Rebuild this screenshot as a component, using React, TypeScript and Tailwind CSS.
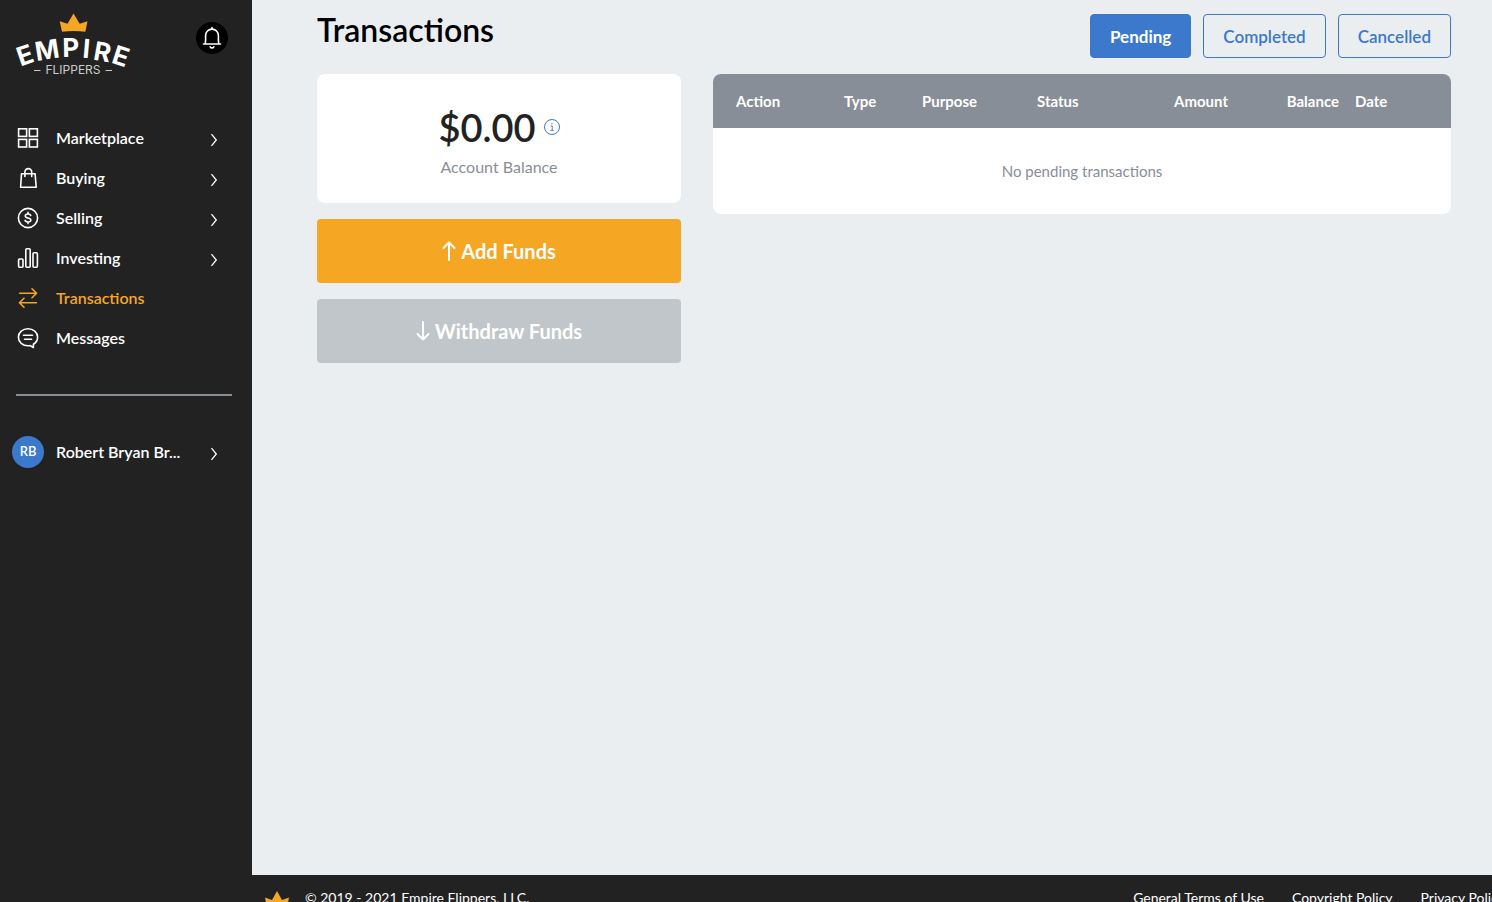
import { useState, type ReactNode } from "react";
import { clsx } from "clsx";

const navItems = [
  { label: "Marketplace", icon: <GridIcon />, expandable: true },
  { label: "Buying", icon: <BagIcon />, expandable: true },
  { label: "Selling", icon: <DollarIcon />, expandable: true },
  { label: "Investing", icon: <BarsIcon />, expandable: true },
  { label: "Transactions", icon: <TransferIcon />, active: true },
  { label: "Messages", icon: <MessageIcon /> },
];

const columns = [
  { label: "Action", className: "w-[123px] pl-[23px] pr-2 text-left" },
  { label: "Type", className: "w-[78px] px-2 text-left" },
  { label: "Purpose", className: "w-[115px] px-2 text-left" },
  { label: "Status", className: "w-[115px] px-2 text-left" },
  { label: "Amount", className: "w-[92px] px-2 text-right" },
  { label: "Balance", className: "w-[111px] px-2 text-right" },
  { label: "Date", className: "px-2 text-left" },
];

const tabs = ["Pending", "Completed", "Cancelled"];

function Icon({ children }: { children: ReactNode }) {
  return (
    <svg
      width="24"
      height="24"
      viewBox="0 0 24 24"
      fill="none"
      stroke="currentColor"
      strokeWidth="1.6"
      strokeLinecap="round"
      strokeLinejoin="round"
      className="shrink-0"
      aria-hidden="true"
    >
      {children}
    </svg>
  );
}

function GridIcon() {
  return (
    <Icon>
      <g strokeLinejoin="miter">
        <rect x="2.6" y="2.8" width="8" height="7.6" />
        <rect x="13.4" y="2.8" width="8" height="7.6" />
        <rect x="2.6" y="13.4" width="8" height="7.6" />
        <rect x="13.4" y="13.4" width="8" height="7.6" />
      </g>
    </Icon>
  );
}

function BagIcon() {
  return (
    <Icon>
      <path d="M5.5 7.8h13.6l1.1 13.4H4.6z" />
      <path d="M8.9 10.4V6a3.4 3.4 0 0 1 6.8 0v4.4" />
    </Icon>
  );
}

function DollarIcon() {
  return (
    <Icon>
      <circle cx="12" cy="12" r="9.6" />
      <path d="M14.7 9.4c-.4-.9-1.4-1.4-2.7-1.4-1.6 0-2.7.7-2.7 1.9 0 2.9 5.5 1.2 5.5 4.1 0 1.2-1.2 2-2.8 2-1.5 0-2.6-.6-3-1.6M12 6.4V8M12 16v1.6" />
    </Icon>
  );
}

function BarsIcon() {
  return (
    <Icon>
      <rect x="2.6" y="13" width="4.4" height="8.2" rx="1" />
      <rect x="9.8" y="2.8" width="4.4" height="18.4" rx="1" />
      <rect x="17" y="6.8" width="4.4" height="14.4" rx="1" />
    </Icon>
  );
}

function TransferIcon() {
  return (
    <Icon>
      <path d="M3.6 7.3h16.8M16 2.8l4.6 4.5-4.6 4.5M20.4 16.8H3.6M8 12.3l-4.6 4.5L8 21.3" />
    </Icon>
  );
}

function MessageIcon() {
  return (
    <Icon>
      <path d="M17.4 18.2C20 16.6 21.6 14 21.6 11.2 21.6 6.4 17.3 2.7 12 2.7S2.4 6.4 2.4 11.2s4.3 8.6 9.6 8.6c.8 0 1.500-.1 2.200-.2l3.200 1.900z" />
      <path d="M7.5 9.3h9M8.5 13.200h7" />
    </Icon>
  );
}

function ChevronIcon() {
  return (
    <svg
      width="8"
      height="14"
      viewBox="0 0 8 14"
      fill="none"
      stroke="currentColor"
      strokeWidth="1.3"
      className="mt-1 shrink-0"
      aria-hidden="true"
    >
      <path d="M1.5 1.200 6.300 7l-4.800 5.800" />
    </svg>
  );
}

function BellIcon() {
  return (
    <Icon>
      <path d="M3.5 18h17M5.200 18c.3-1.600.4-3.300.4-5.300V9.500a6.400 6.400 0 0 1 12.800 0v3.200c0 2 .1 3.700.4 5.300" />
      <path d="M12 3V1.600M10.200 20.800c.4.800 1 1.100 1.800 1.100s1.400-.3 1.800-1.100" />
    </Icon>
  );
}

function ArrowIcon({ down = false }: { down?: boolean }) {
  return (
    <svg
      width="14"
      height="20"
      viewBox="0 0 14 20"
      fill="none"
      stroke="currentColor"
      strokeWidth="2"
      strokeLinecap="round"
      strokeLinejoin="round"
      className={clsx("shrink-0", down && "rotate-180")}
      aria-hidden="true"
    >
      <path d="M7 19V1.500M1.500 7 7 1.500 12.500 7" />
    </svg>
  );
}

function InfoIcon() {
  return (
    <svg
      width="16"
      height="16"
      viewBox="0 0 16 16"
      fill="none"
      stroke="currentColor"
      aria-hidden="true"
    >
      <circle cx="8" cy="8" r="7.500" />
      <path d="M6.600 7h1.600v4.200M6.400 11.400h3.400" strokeWidth="0.900" />
      <circle cx="7.900" cy="4.800" r="0.700" fill="currentColor" stroke="none" />
    </svg>
  );
}

function Logo() {
  return (
    <svg
      width="116"
      height="64"
      viewBox="0 0 116 64"
      role="img"
      aria-label="Empire Flippers"
      className="overflow-visible"
    >
      <path
        d="M43.700 9.200 51.500 11.800 57.500 1.500l6.200 10.300 7.800-2.600-2.200 10.600q-11.800-1.400-23.300 0z"
        fill="#f5a623"
      />
      <text
        x="4.600 20.500 46.500 66 76.500 94.500"
        y="54.500 49 45 45.500 47.500 50.500"
        rotate="-19 -9 -1 5 10 18"
        fontSize="26"
        fontWeight="700"
        fill="#fff"
        className="font-['Inter',sans-serif]"
      >
        EMPIRE
      </text>
      <text
        x="57"
        y="62"
        textAnchor="middle"
        fontSize="12"
        fill="#c9cacc"
        className="font-['Inter',sans-serif]"
      >
        FLIPPERS
      </text>
      <path d="M18 58.500h6.500M89.500 58.500h6.500" stroke="#c9cacc" />
    </svg>
  );
}

function Sidebar() {
  return (
    <aside className="w-[252px] shrink-0 bg-[#222222] text-white">
      <div className="flex items-start justify-between pt-3 pr-6 pl-4">
        <a href="#home">
          <Logo />
        </a>
        <button
          type="button"
          aria-label="Notifications"
          className="mt-2.5 flex size-8 items-center justify-center rounded-full bg-black"
        >
          <BellIcon />
        </button>
      </div>

      <nav className="mt-[42px] pr-[34px] pl-4">
        {navItems.map((item) => (
          <a
            key={item.label}
            href={`#${item.label.toLowerCase()}`}
            className={clsx(
              "flex h-10 items-center gap-4 font-semibold",
              item.active && "text-[#f5a623]",
            )}
          >
            {item.icon}
            <span className="flex-1">{item.label}</span>
            {item.expandable && <ChevronIcon />}
          </a>
        ))}
      </nav>

      <hr className="mt-9 mr-5 ml-4 border-t-2 border-[#888e98]" />

      <button
        type="button"
        className="mt-10 flex w-full items-center gap-3 pr-[34px] pl-3 text-left font-semibold"
      >
        <span className="flex size-8 shrink-0 items-center justify-center rounded-full bg-[#3c78cb] text-[13px] font-semibold">
          RB
        </span>
        <span className="flex-1">Robert Bryan Br...</span>
        <ChevronIcon />
      </button>
    </aside>
  );
}

function BalancePanel() {
  return (
    <section className="flex w-[364px] shrink-0 flex-col gap-4">
      <div className="rounded-lg bg-white pt-7 pb-6 text-center">
        <div className="flex items-center justify-center gap-2">
          <span className="text-[38px] leading-[50px] font-semibold text-[#222222]">
            $0.00
          </span>
          <button
            type="button"
            aria-label="Balance details"
            className="text-[#3c78cb]"
          >
            <InfoIcon />
          </button>
        </div>
        <p className="mt-[3px] text-base text-[#888e98]">Account Balance</p>
      </div>
      <button
        type="button"
        className="flex h-16 items-center justify-center gap-[5px] rounded bg-[#f5a623] text-xl font-bold text-white"
      >
        <ArrowIcon />
        Add Funds
      </button>
      <button
        type="button"
        disabled
        className="flex h-16 items-center justify-center gap-[5px] rounded bg-[#c1c6ca] text-xl font-bold text-white"
      >
        <ArrowIcon down />
        Withdraw Funds
      </button>
    </section>
  );
}

function TransactionsTable({ status }: { status: string }) {
  return (
    <div className="min-w-0 flex-1 self-start overflow-hidden rounded-lg bg-white">
      <table className="w-full table-fixed">
        <thead className="bg-[#888e98] text-white">
          <tr className="h-[54px]">
            {columns.map((column) => (
              <th
                key={column.label}
                scope="col"
                className={clsx("text-[15px] font-bold", column.className)}
              >
                {column.label}
              </th>
            ))}
          </tr>
        </thead>
        <tbody>
          <tr className="h-[86px]">
            <td
              colSpan={columns.length}
              className="text-center text-[15px] text-[#888e98]"
            >
              No {status.toLowerCase()} transactions
            </td>
          </tr>
        </tbody>
      </table>
    </div>
  );
}

function Footer() {
  return (
    <footer className="flex shrink-0 items-start justify-between bg-[#222222] pt-3 pb-8 pl-3 text-sm leading-[22px] text-white">
      <div className="flex gap-[15px]">
        <svg width="26" height="24" viewBox="0 0 26 24" aria-hidden="true">
          <path
            d="M1 10.500 8 13l5-9 5 9 7-2.500L23 21q-10-1.200-20 0z"
            fill="#f5a623"
          />
        </svg>
        <span>© 2019 - 2021 Empire Flippers, LLC.</span>
      </div>
      <div className="-mr-[13px] flex gap-7 whitespace-nowrap">
        <a href="#terms">General Terms of Use</a>
        <a href="#copyright">Copyright Policy</a>
        <a href="#privacy">Privacy Policy</a>
      </div>
    </footer>
  );
}

export default function App() {
  const [tab, setTab] = useState("Pending");

  return (
    <div className="flex h-screen overflow-hidden bg-[#222222] font-['Lato',sans-serif] text-base">
      <Sidebar />
      <div className="flex min-w-0 flex-1 flex-col">
        <main className="min-h-[calc(100vh-27px)] bg-[#eaeef1] pt-3.5 pr-[41px] pl-[65px]">
          <div className="flex items-start justify-between">
            <h1 className="text-[32px] leading-8 font-semibold text-black">
              Transactions
            </h1>
            <div className="flex gap-3">
              {tabs.map((name) => (
                <button
                  key={name}
                  type="button"
                  aria-pressed={tab === name}
                  onClick={() => setTab(name)}
                  className={clsx(
                    "h-11 rounded border border-[#3c78cb] px-[19px] pt-0.5 text-[17px]",
                    tab === name
                      ? "bg-[#3c78cb] font-bold text-white"
                      : "font-semibold text-[#3c78cb]",
                  )}
                >
                  {name}
                </button>
              ))}
            </div>
          </div>
          <div className="mt-4 flex gap-8">
            <BalancePanel />
            <TransactionsTable status={tab} />
          </div>
        </main>
        <Footer />
      </div>
    </div>
  );
}
